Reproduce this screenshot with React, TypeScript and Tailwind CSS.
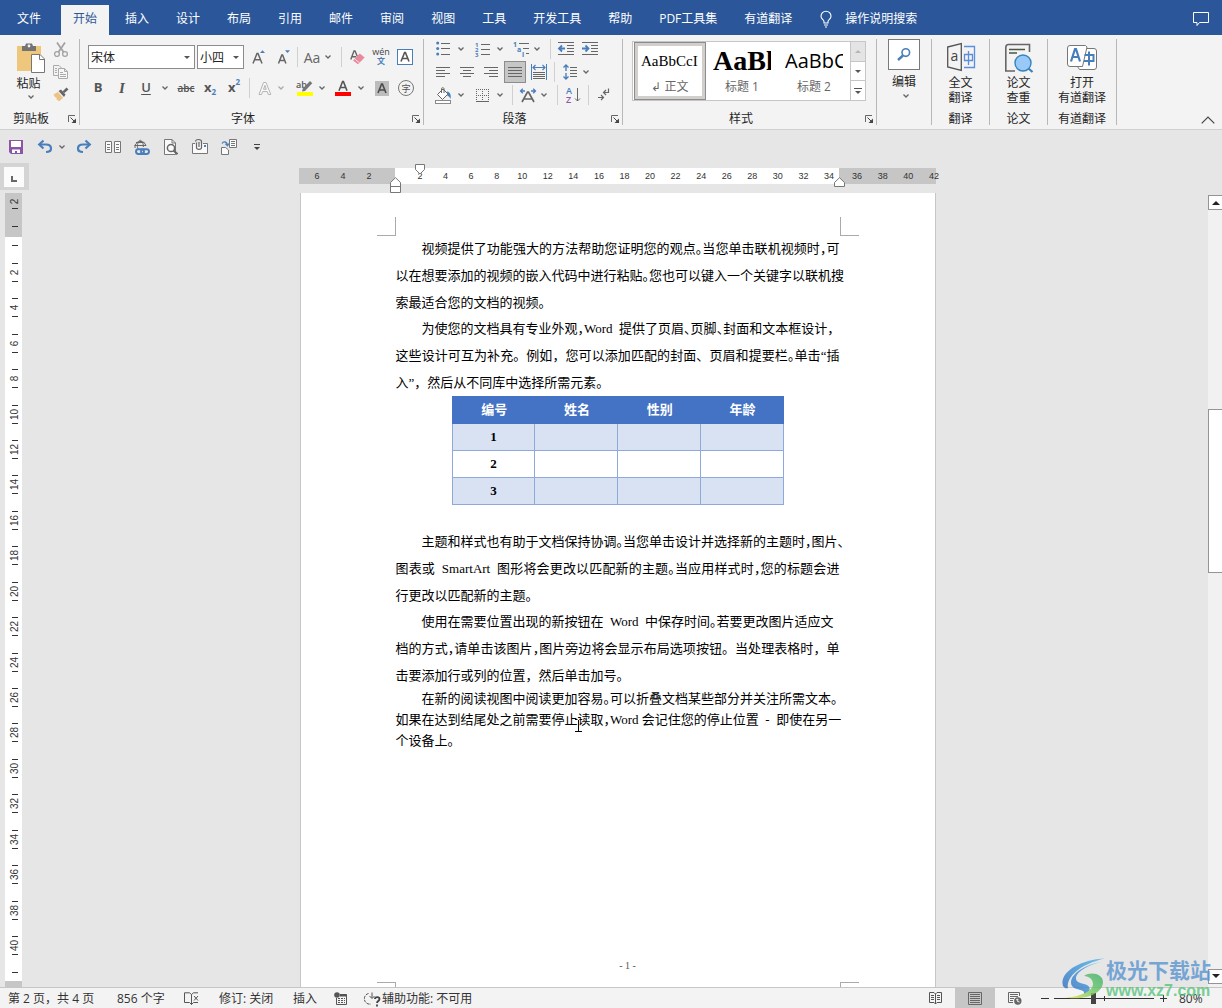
import React, { type ReactNode } from "react";

const GRAY = "#666666";
const BLUE = "#4a7ebb";

function Svg({ w, h, children, className = "" }: { w: number; h: number; children: ReactNode; className?: string }) {
  return (
    <svg width={w} height={h} viewBox={`0 0 ${w} ${h}`} fill="none" className={`shrink-0 overflow-visible ${className}`} aria-hidden="true">
      {children}
    </svg>
  );
}

function Tool({ label, className = "w-6", children }: { label: string; className?: string; children: ReactNode }) {
  return (
    <button type="button" aria-label={label} title={label} className={`flex h-[22px] shrink-0 items-center justify-center ${className}`}>
      {children}
    </button>
  );
}

function Chevron() {
  return (
    <Svg w={6} h={4}>
      <path d="M0.5 0.5 L3 3 L5.5 0.5" stroke={GRAY} strokeWidth="1.3" />
    </Svg>
  );
}

function More({ label, className = "w-3" }: { label: string; className?: string }) {
  return (
    <Tool label={label} className={className}>
      <Chevron />
    </Tool>
  );
}

function Sep({ className = "" }: { className?: string }) {
  return <div className={`h-5 w-px shrink-0 bg-[#d0d0d0] ${className}`} />;
}

function Launcher({ label }: { label: string }) {
  return (
    <button type="button" aria-label={label} className="mr-[3px] mt-[3px] flex h-2 w-2 shrink-0">
      <Svg w={8} h={8}>
        <path d="M0.5 7 V0.5 H7" stroke="#666" />
        <path d="M2.5 2.5 L6 6" stroke="#444" />
        <path d="M8 3.5 V8 H3.5 Z" fill="#444" />
      </Svg>
    </button>
  );
}

function Group({ label, width, launcher = false, children }: { label: string; width: string; launcher?: boolean; children: ReactNode }) {
  return (
    <section aria-label={label} className={`flex shrink-0 flex-col border-r border-[#b8b8b8] ${width}`}>
      <div className="min-h-0 flex-1">{children}</div>
      <div className="flex h-[15px] items-center">
        <span className={`flex-1 pt-[2px] text-center leading-[15px] ${launcher ? "pr-[6px]" : ""}`}>{label}</span>
        {launcher && <Launcher label={`${label}设置`} />}
      </div>
    </section>
  );
}

const tabsAfter = ["插入", "设计", "布局", "引用", "邮件", "审阅", "视图", "工具", "开发工具", "帮助", "PDF工具集", "有道翻译"];

function TabBar() {
  return (
    <nav className="flex h-[35px] shrink-0 items-stretch gap-[3px] bg-[#2b579a] pl-[5px] pr-3 pt-[5px] text-white">
      <button type="button" className="mb-[2px] mr-[5px] px-3">文件</button>
      <button type="button" className="mr-px bg-[#f3f3f3] px-3 pb-[2px] text-[#2b579a]">开始</button>
      {tabsAfter.map((t) => (
        <button type="button" key={t} className="mb-[2px] whitespace-nowrap px-3">
          {t}
        </button>
      ))}
      <button type="button" className="mb-[2px] flex items-center gap-[13px] whitespace-nowrap pl-[13px]">
        <Svg w={12} h={17} className="mt-px">
          <path d="M4 12 V10.5 C4 9 1 8 1 5.2 A4.6 4.6 0 0 1 11 5.2 C11 8 8 9 8 10.5 V12 Z M4 14 H8 M5 16 H7" stroke="#fff" strokeWidth="1.1" />
        </Svg>
        操作说明搜索
      </button>
      <button type="button" aria-label="批注" className="mb-[2px] ml-auto">
        <Svg w={18} h={16}>
          <path d="M1.5 1.5 H16.5 V11.5 H7.5 L5 14.5 V11.5 H1.5 Z" stroke="#fff" />
        </Svg>
      </button>
    </nav>
  );
}

function Combo({ label, value, options, className }: { label: string; value: string; options: string[]; className: string }) {
  return (
    <div className={`relative h-6 border border-[#8c8c8c] bg-white ${className}`}>
      <select aria-label={label} defaultValue={value} className="block h-full w-full appearance-none bg-transparent pl-[2px] pt-[2px] text-[#222] outline-none">
        {options.map((o) => (
          <option key={o}>{o}</option>
        ))}
      </select>
      <svg width="6" height="3" className="pointer-events-none absolute right-[4px] top-[10px]" aria-hidden="true">
        <path d="M0 0 H6 L3 3 Z" fill="#555" />
      </svg>
    </div>
  );
}

function ClipboardGroup() {
  return (
    <Group label="剪贴板" width="w-20" launcher>
      <div className="flex">
        <button type="button" className="flex w-[50px] flex-col items-center pl-[11px] pt-1">
          <Svg w={28} h={30}>
            <rect x="0" y="3" width="24" height="25" fill="#eec67c" />
            <path d="M5 3 H8 L9 0.5 H15 L16 3 H19 V8 H5 Z" fill="#737373" />
            <circle cx="12" cy="3" r="1.4" fill="#f3f3f3" />
            <path d="M14.5 11.5 H23 L27.5 16 V29.5 H14.5 Z" fill="#fff" stroke="#777" />
            <path d="M22.5 11.5 V16.5 H27.5" stroke="#777" />
          </Svg>
          <span className="-ml-1 mt-[3px] h-[15px] whitespace-nowrap leading-[15px]">粘贴</span>
          <span className="mt-1">
            <Chevron />
          </span>
        </button>
        <div className="flex flex-col">
          <Tool label="剪切" className="w-[22px]">
            <Svg w={14} h={16}>
              <path d="M3 0.5 L9.5 10 M11 0.5 L4.5 10" stroke="#a3a3a3" strokeWidth="1.8" />
              <circle cx="3" cy="12" r="2.4" stroke="#a3a3a3" strokeWidth="1.3" />
              <circle cx="11" cy="12" r="2.4" stroke="#a3a3a3" strokeWidth="1.3" />
            </Svg>
          </Tool>
          <Tool label="复制" className="w-[22px]">
            <Svg w={16} h={15}>
              <path d="M5 10.5 H0.5 V0.5 H6 L8.5 3" stroke="#aaa" />
              <path d="M5.5 3.5 H11.5 L14.5 6.5 V13.5 H5.5 Z" fill="#f7f7f7" stroke="#aaa" />
              <path d="M11.5 3.5 V6.5 H14.5 M7 7.5 H10 M7 9.5 H13 M7 11.5 H13 M2 3.5 H4 M2 5.5 H4 M2 7.5 H4" stroke="#aaa" />
            </Svg>
          </Tool>
          <Tool label="格式刷" className="w-[22px]">
            <Svg w={16} h={15}>
              <path d="M13.5 0.5 L15.5 2.5 L11.5 6 L9.5 4.5 Z" fill="#666" />
              <path d="M5.5 4 L8 2.5 L12.5 7.5 L11 10 Z" fill="#666" />
              <path d="M4.8 5 L10.2 10.8 L6 14.5 C5 13 4 12.5 3 12.5 L4 11 C2.5 11 1.5 9.5 0.5 7.5 Z" fill="#ecc384" />
            </Svg>
          </Tool>
        </div>
      </div>
    </Group>
  );
}

function FontGroup() {
  return (
    <Group label="字体" width="w-[344px]" launcher>
      <div className="flex h-[30px] items-center pl-2 pt-[6px]">
        <Combo label="字体" value="宋体" options={["宋体", "黑体", "楷体"]} className="w-[107px]" />
        <Combo label="字号" value="小四" options={["小四", "四号", "五号"]} className="ml-[2px] w-[47px]" />
        <Tool label="增大字号" className="ml-[3px] w-6">
          <Svg w={14} h={14}>
            <path d="M1 13.5 L5 3.5 H6 L10 13.5 M2.5 9.8 H8.5" stroke={GRAY} strokeWidth="1.5" />
            <path d="M8 3 L10.5 0.3 L13 3 Z" fill={BLUE} />
          </Svg>
        </Tool>
        <Tool label="减小字号" className="w-[26px]">
          <Svg w={14} h={14}>
            <path d="M1.5 13.5 L4.8 5 H5.6 L8.9 13.5 M2.8 10.4 H7.6" stroke={GRAY} strokeWidth="1.5" />
            <path d="M8 0.3 L10.5 3 L13 0.3 Z" fill={BLUE} />
          </Svg>
        </Tool>
        <Sep />
        <Tool label="更改大小写" className="ml-[2px] w-6 text-[14px] text-[#666]">Aa</Tool>
        <More label="大小写选项" className="ml-[-2px] w-3" />
        <Sep className="ml-[7px]" />
        <Tool label="清除所有格式" className="ml-[3px] w-6">
          <Svg w={15} h={15}>
            <path d="M0.8 9.5 L4 1 H5 L7.4 6.5 M2 6.8 H6" stroke={GRAY} strokeWidth="1.4" />
            <path d="M9.8 3.5 L14.6 7.4 L8 14.3 L3 10.5 Z" fill="#e8899d" />
            <path d="M4.6 8.9 L9.5 12.8" stroke="#fbe3e8" />
          </Svg>
        </Tool>
        <Tool label="拼音指南" className="w-6 flex-col">
          <span className="h-2 text-[9px] leading-[6px] text-[#444]">wén</span>
          <span className="h-2 text-[8px] font-bold leading-[8px] text-[#4a7ebb]">文</span>
        </Tool>
        <Tool label="字符边框" className="w-6">
          <Svg w={16} h={16}>
            <rect x="0.5" y="0.5" width="15" height="15" fill="#fff" stroke={BLUE} />
            <path d="M4 12.5 L7.6 3.5 H8.4 L12 12.5 M5.2 9.5 H10.8" stroke="#555" strokeWidth="1.6" />
          </Svg>
        </Tool>
      </div>
      <div className="flex h-[38px] items-center pl-[6px] text-[#555]">
        <Tool label="加粗"><b className="text-[13px]">B</b></Tool>
        <Tool label="倾斜"><i className="font-['Liberation_Serif'] text-[15px] font-bold">I</i></Tool>
        <Tool label="下划线"><span className="text-[13px] font-semibold underline underline-offset-2">U</span></Tool>
        <More label="下划线选项" className="ml-[1px] w-3" />
        <Tool label="删除线" className="ml-[3px] w-6"><span className="text-[10px] font-semibold line-through">abc</span></Tool>
        <Tool label="下标"><b className="text-[13px]">x</b><span className="mt-2 text-[8px] font-bold text-[#4a7ebb]">2</span></Tool>
        <Tool label="上标"><b className="text-[13px]">x</b><span className="mb-3 text-[8px] font-bold text-[#4a7ebb]">2</span></Tool>
        <Sep className="ml-[3px]" />
        <Tool label="文本效果" className="ml-[3px] w-6">
          <Svg w={14} h={15}>
            <path d="M1 13.5 L5.5 1.5 H8 L12.8 13.5 H10.3 L9.2 10.5 H4.6 L3.5 13.5 Z M5.5 8.3 H8.3 L6.9 4.3 Z" fill="#fafafa" stroke="#b5b5b5" />
          </Svg>
        </Tool>
        <More label="文本效果选项" className="ml-[-2px] w-3 opacity-50" />
        <Tool label="突出显示" className="ml-[5px] w-6">
          <Svg w={17} h={17}>
            <text x="0" y="8" fontSize="9" fill="#555" fontWeight="600">ab</text>
            <path d="M14 1 L16.3 3.3 L9 11 L6 11.5 L6.8 8.5 Z" fill="#777" />
            <rect x="1" y="12" width="16" height="4" fill="#ffff00" />
          </Svg>
        </Tool>
        <More label="突出显示选项" className="w-3" />
        <Tool label="字体颜色" className="ml-[3px] w-6">
          <Svg w={16} h={17}>
            <path d="M4 10.8 L7.6 1.5 H8.4 L12 10.8 M5.2 7.5 H10.8" stroke="#555" strokeWidth="1.6" />
            <rect x="0" y="12" width="16" height="4" fill="#ff0000" />
          </Svg>
        </Tool>
        <More label="字体颜色选项" />
        <Tool label="字符底纹" className="ml-[3px] w-6">
          <Svg w={14} h={15}>
            <rect width="14" height="15" fill="#bcbcbc" />
            <path d="M3 12 L6.6 3 H7.4 L11 12 M4.2 9 H9.8" stroke="#4a4a4a" strokeWidth="1.6" />
          </Svg>
        </Tool>
        <Tool label="带圈字符">
          <span className="flex h-4 w-4 items-center justify-center rounded-full border border-[#777] text-[9px] leading-none">字</span>
        </Tool>
      </div>
    </Group>
  );
}

function Lines({ rows }: { rows: [number, number][] }) {
  return (
    <Svg w={14} h={12}>
      {rows.map(([a, b], i) => (
        <path key={i} d={`M${a} ${i * 3 + 1.5} H${b}`} stroke={GRAY} />
      ))}
    </Svg>
  );
}

function ParagraphGroup() {
  return (
    <Group label="段落" width="w-[199px]" launcher>
      <div className="flex h-[19px] items-center pl-[7px]">
        <Tool label="项目符号">
          <Svg w={14} h={15}>
            {[2, 7.5, 13].map((y) => (
              <g key={y}>
                <circle cx="1.7" cy={y} r="1.5" fill={BLUE} />
                <path d={`M5 ${Math.floor(y)}.5 H14`} stroke={GRAY} />
              </g>
            ))}
          </Svg>
        </Tool>
        <More label="项目符号选项" />
        <Tool label="编号" className="ml-[3px] w-6">
          <Svg w={15} h={16}>
            {[1, 2, 3].map((n) => (
              <g key={n}>
                <text x="0" y={n * 5 + 0.5} fontSize="6" fontWeight="700" fill={BLUE}>{n}</text>
                <path d={`M6 ${n * 5 - 1.5} H15`} stroke={GRAY} />
              </g>
            ))}
          </Svg>
        </Tool>
        <More label="编号选项" />
        <Tool label="多级列表" className="ml-[3px] w-6">
          <Svg w={17} h={16}>
            <text x="0" y="5.5" fontSize="7" fontWeight="700" fill={BLUE}>1</text>
            <text x="4" y="10.5" fontSize="7" fontWeight="700" fill={BLUE}>a</text>
            <text x="9" y="15.5" fontSize="7" fontWeight="700" fill={BLUE}>i</text>
            <path d="M6 2.5 H16 M10 7.5 H16 M13 12.5 H16" stroke={GRAY} />
          </Svg>
        </Tool>
        <More label="多级列表选项" className="ml-[-2px] w-3" />
        <Sep className="ml-[7px]" />
        <Tool label="减少缩进" className="ml-[3px] w-6">
          <Svg w={16} h={13}>
            <path d="M0 0.5 H16 M9 3.5 H16 M9 6.5 H16 M9 9.5 H16 M0 12.5 H16" stroke={GRAY} />
            <path d="M1 6.5 H7 M4 3.5 L1 6.5 L4 9.5" stroke={BLUE} strokeWidth="1.8" />
          </Svg>
        </Tool>
        <Tool label="增加缩进">
          <Svg w={16} h={13}>
            <path d="M0 0.5 H16 M9 3.5 H16 M9 6.5 H16 M9 9.5 H16 M0 12.5 H16" stroke={GRAY} />
            <path d="M0 6.5 H6 M3.5 3.5 L6.5 6.5 L3.5 9.5" stroke={BLUE} strokeWidth="1.8" />
          </Svg>
        </Tool>
      </div>
      <div className="flex h-[27px] items-center pl-[7px]">
        <Tool label="左对齐"><Lines rows={[[0, 14], [0, 9], [0, 14], [0, 9]]} /></Tool>
        <Tool label="居中"><Lines rows={[[0, 14], [3, 11], [0, 14], [3, 11]]} /></Tool>
        <Tool label="右对齐"><Lines rows={[[0, 14], [5, 14], [0, 14], [5, 14]]} /></Tool>
        <Tool label="两端对齐" className="mx-px w-[22px] border border-[#8c8c8c] bg-[#c6c6c6]"><Lines rows={[[0, 14], [0, 14], [0, 14], [0, 14]]} /></Tool>
        <Tool label="分散对齐">
          <Svg w={16} h={16}>
            <path d="M0.5 0 V16 M15.5 0 V16" stroke={BLUE} />
            <path d="M2 3.5 H14 M4.5 1 L2 3.5 L4.5 6 M11.5 1 L14 3.5 L11.5 6" stroke={BLUE} strokeWidth="1.2" />
            <path d="M2 8.5 H14 M2 10.5 H14 M2 12.5 H14 M2 14.5 H14" stroke={GRAY} />
          </Svg>
        </Tool>
        <Sep className="ml-[3px]" />
        <Tool label="行距" className="ml-[3px] w-6">
          <Svg w={14} h={16}>
            <path d="M3 1 V7 M0.5 3.5 L3 1 L5.5 3.5 M3 9 V15 M0.5 12.5 L3 15 L5.5 12.5" stroke={BLUE} strokeWidth="1.4" />
            <path d="M7 3.5 H14 M7 6.5 H14 M7 9.5 H14 M7 12.5 H14" stroke={GRAY} />
          </Svg>
        </Tool>
        <More label="行距选项" className="ml-[-2px] w-3" />
      </div>
      <div className="flex h-5 items-center pl-[7px]">
        <Tool label="底纹">
          <Svg w={17} h={17}>
            <path d="M2.5 7.5 L8 2 L13 7 L7.5 12.5 Z" fill="#fff" stroke={GRAY} />
            <path d="M6.5 6 V1.5 C6.5 0.5 9 0.5 9 1.5 V6" stroke={GRAY} />
            <path d="M12 4.5 C15 5 16.5 8 15.5 12 C14.5 10 14 9 12.5 9 Z" fill={BLUE} />
            <rect x="0.5" y="13.5" width="15" height="3" fill="#fff" stroke="#8a8a8a" />
          </Svg>
        </Tool>
        <More label="底纹选项" />
        <Tool label="边框" className="ml-[3px] w-6">
          <Svg w={13} h={13}>
            <path d="M0.5 0 V12 M6.5 0 V12 M12.5 0 V12 M0 0.5 H13 M0 6.5 H13" stroke={GRAY} strokeDasharray="1 1" />
            <path d="M0 12.5 H13" stroke={GRAY} />
          </Svg>
        </Tool>
        <More label="边框选项" className="w-3" />
        <Sep className="ml-[6px]" />
        <Tool label="中文版式" className="ml-[3px] w-6">
          <Svg w={16} h={15}>
            <path d="M0.5 3 H5 M2.8 0.7 L0.5 3 L2.8 5.3 M15.5 3 H11 M13.2 0.7 L15.5 3 L13.2 5.3" stroke={BLUE} strokeWidth="1.3" />
            <path d="M2 14 L7.5 4 H8.5 L14 14 M4 11 H12" stroke={GRAY} strokeWidth="1.7" />
          </Svg>
        </Tool>
        <More label="中文版式选项" className="ml-[-2px] w-3" />
        <Sep className="ml-[7px]" />
        <Tool label="排序" className="ml-[3px] w-6">
          <Svg w={14} h={17}>
            <text x="0" y="7" fontSize="9" fontWeight="600" fill={BLUE}>A</text>
            <text x="0" y="16" fontSize="9" fontWeight="600" fill="#8c5aa8">Z</text>
            <path d="M11.5 1 V14 M9 11.5 L11.5 14 L14 11.5" stroke={GRAY} />
          </Svg>
        </Tool>
        <Sep className="ml-[3px]" />
        <Tool label="显示编辑标记" className="ml-[3px] w-6">
          <Svg w={12} h={14}>
            <path d="M10.5 0.5 V4.5 H6 M8 2 L5.5 4.5 L8 7" stroke={GRAY} strokeWidth="1.2" />
            <path d="M0 9.5 H5.5 M3 7 L5.5 9.5 L3 12" stroke={GRAY} strokeWidth="1.2" />
          </Svg>
        </Tool>
      </div>
    </Group>
  );
}

function StyleItem({ selected = false, preview, name, font }: { selected?: boolean; preview: string; name: string; font: string }) {
  return (
    <button
      type="button"
      className={`flex w-[72px] flex-col items-center ${selected ? "border border-[#8c8c8c] bg-white ring-[3px] ring-inset ring-[#d0cfcb]" : "border border-transparent"}`}
    >
      <span className={`block h-9 w-[58px] overflow-hidden whitespace-nowrap text-left leading-[36px] text-black ${font}`}>{preview}</span>
      <span className="whitespace-nowrap leading-[15px] text-[#666]">{name}</span>
    </button>
  );
}

function StylesGroup() {
  return (
    <Group label="样式" width="w-[254px]" launcher>
      <div className="ml-[9px] mt-[2px] flex h-[60px] w-[234px] border border-[#c6c6c6] bg-white">
        <div className="flex flex-1 pl-px">
          <StyleItem selected preview="AaBbCcI" name="↲ 正文" font="font-['Liberation_Serif'] text-[15px]" />
          <StyleItem preview="AaBl" name="标题 1" font="font-['Liberation_Serif'] text-[28px] font-bold" />
          <StyleItem preview="AaBbC" name="标题 2" font="font-['Open_Sans'] text-[20px]" />
        </div>
        <div className="flex w-[15px] flex-col divide-y divide-[#c6c6c6] border-l border-[#c6c6c6]">
          <button type="button" aria-label="上一行样式" className="flex flex-1 items-center justify-center bg-[#e4e4e4]">
            <Svg w={6} h={3}><path d="M0 3 H6 L3 0 Z" fill="#b5b5b5" /></Svg>
          </button>
          <button type="button" aria-label="下一行样式" className="flex flex-1 items-center justify-center">
            <Svg w={6} h={3}><path d="M0 0 H6 L3 3 Z" fill="#555" /></Svg>
          </button>
          <button type="button" aria-label="更多样式" className="flex flex-1 items-center justify-center">
            <Svg w={8} h={6}><path d="M0 0.5 H8" stroke="#555" /><path d="M1 3 H7 L4 6 Z" fill="#555" /></Svg>
          </button>
        </div>
      </div>
    </Group>
  );
}

function BigButton({ icon, top, bottom }: { icon: ReactNode; top: string; bottom: string }) {
  return (
    <button type="button" className="flex w-full flex-col items-center whitespace-nowrap pt-1 leading-[15px]">
      <span className="flex h-[32px] items-start">{icon}</span>
      <span>{top}</span>
      <span>{bottom}</span>
    </button>
  );
}

function Ribbon() {
  return (
    <div className="flex h-[95px] shrink-0 border-b border-[#d0d0d0] bg-[#f3f3f3] py-1 text-[#262626]">
      <ClipboardGroup />
      <FontGroup />
      <ParagraphGroup />
      <StylesGroup />
      <section aria-label="编辑" className="flex w-[55px] shrink-0 flex-col border-r border-[#b8b8b8]">
        <button type="button" className="flex flex-col items-center">
          <span className="flex h-[31px] w-8 items-center justify-center border border-[#7a7a7a] bg-white">
            <Svg w={14} h={13}>
              <circle cx="8.8" cy="4.6" r="3.8" stroke={BLUE} strokeWidth="1.6" />
              <path d="M6 7.5 L1 12" stroke={BLUE} strokeWidth="2.4" />
            </Svg>
          </span>
          <span className="mt-1 leading-[15px]">编辑</span>
          <span className="ml-1 mt-[5px]"><Chevron /></span>
        </button>
      </section>
      <Group label="翻译" width="w-[58px]">
        <BigButton
          top="全文"
          bottom="翻译"
          icon={
            <Svg w={28} h={28}>
              <path d="M0.7 4 L14.3 0.7 V27.3 L0.7 24 Z" stroke="#555" strokeWidth="1.3" />
              <path d="M17 3.5 H27.5 V24.5 H17" stroke="#5b8fdc" strokeWidth="1.3" />
              <text x="3.5" y="18" fontSize="14" fill="#444">a</text>
              <path d="M17.5 11.5 H25.5 V17.5 H17.5 Z M21.5 8 V22" stroke="#5b8fdc" strokeWidth="1.3" />
            </Svg>
          }
        />
      </Group>
      <Group label="论文" width="w-[58px]">
        <BigButton
          top="论文"
          bottom="查重"
          icon={
            <Svg w={28} h={30}>
              <path d="M24.5 9 V1.5 H3.5 C1.5 1.5 0.8 2.5 0.8 4.5 V28 H10" stroke="#666" strokeWidth="1.6" />
              <path d="M4 6.5 H20 M4 10 H12" stroke="#4d5545" strokeWidth="1.6" />
              <circle cx="18" cy="20" r="8" fill="#99c9f8" stroke="#3584bd" strokeWidth="1.4" />
              <path d="M23.5 25.5 L27.5 29" stroke="#3584bd" strokeWidth="2.2" />
            </Svg>
          }
        />
      </Group>
      <Group label="有道翻译" width="w-[69px]">
        <BigButton
          top="打开"
          bottom="有道翻译"
          icon={
            <Svg w={30} h={28}>
              <path d="M20 5.5 H27 Q29.5 5.5 29.5 8 V24 Q29.5 26.5 27 26.5 H12.5 L10.5 23.5" fill="#fff" stroke="#777" />
              <path d="M3 2.5 H18.5 L20 4 L15.5 23.5 H3 Q0.5 23.5 0.5 21 V5 Q0.5 2.5 3 2.5 Z" fill="#fff" stroke="#777" />
              <path d="M4 18.5 L8 6 H9 L13 18.5 M5.5 14 H11.5" stroke={BLUE} strokeWidth="2.2" />
              <path d="M17.5 12 H26.5 V18 H17 M22 8.5 V22.5" stroke={BLUE} strokeWidth="2" />
            </Svg>
          }
        />
      </Group>
      <button type="button" aria-label="折叠功能区" className="ml-auto mr-[7px] self-end pb-px">
        <Svg w={14} h={8}><path d="M0.7 7.3 L7 1 L13.3 7.3" stroke="#444" strokeWidth="1.2" /></Svg>
      </button>
    </div>
  );
}

function QuickAccess() {
  return (
    <div className="flex h-[33px] shrink-0 items-center pl-1">
      <Tool label="保存">
        <Svg w={14} h={14}>
          <path d="M0 0 H14 V14 H2 L0 12 Z" fill="#8a55a8" />
          <rect x="2" y="1" width="10" height="6" fill="#fff" />
          <path d="M3 9.5 H11 V13 H8 V11 H6 V13 H3 Z" fill="#fff" />
        </Svg>
      </Tool>
      <Tool label="撤消" className="ml-[5px] w-6">
        <Svg w={15} h={13}>
          <path d="M2 4.5 H8 C12 4.5 13 7 13 8.5 C13 10.5 11.5 12 8 12" stroke={BLUE} strokeWidth="2.2" />
          <path d="M5.5 0.5 L1.2 4.5 L5.5 8.5" stroke={BLUE} strokeWidth="2.2" />
        </Svg>
      </Tool>
      <More label="撤消选项" className="ml-[-1px] w-3" />
      <Tool label="恢复" className="ml-[3px] w-6">
        <Svg w={15} h={13}>
          <path d="M13 4.5 H7 C3 4.5 2 7 2 8.5 C2 10.5 3.5 12 7 12" stroke={BLUE} strokeWidth="2.2" />
          <path d="M9.5 0.5 L13.8 4.5 L9.5 8.5" stroke={BLUE} strokeWidth="2.2" />
        </Svg>
      </Tool>
      <Tool label="并排查看" className="ml-[6px] w-6">
        <Svg w={16} h={12}>
          <path d="M0.5 0.5 H6.5 V11.5 H0.5 Z M9.5 0.5 H15.5 V11.5 H9.5 Z" fill="#fafafa" stroke="#777" />
          <path d="M2 3.5 H5 M2 6.5 H5 M2 8.5 H5 M11 3.5 H14 M11 6.5 H14 M11 8.5 H14" stroke="#777" />
        </Svg>
      </Tool>
      <Tool label="超链接" className="ml-[5px] w-6">
        <Svg w={16} h={16}>
          <path d="M1 9 A5.5 5.5 0 1 1 12 7 M0.5 6.5 H12 M6.3 1 C3 4 3 7 4 10 M6.3 1 C9 3 9.5 5 9.3 8 M2 3.5 H10.5" stroke={GRAY} />
          <rect x="2" y="10.2" width="8" height="4.8" rx="2.4" stroke={BLUE} strokeWidth="1.9" />
          <rect x="7" y="10.2" width="8" height="4.8" rx="2.4" stroke={BLUE} strokeWidth="1.9" />
        </Svg>
      </Tool>
      <Tool label="打印预览" className="ml-[5px] w-6">
        <Svg w={15} h={16}>
          <path d="M0.5 0.5 H8 L11.5 4 V15.5 H0.5 Z" fill="#fafafa" stroke="#777" />
          <path d="M8 0.5 V4 H11.5" stroke="#777" />
          <circle cx="7" cy="9" r="3.6" fill="#fafafa" stroke={GRAY} strokeWidth="1.5" />
          <path d="M9.5 11.5 L13.5 15.3" stroke={GRAY} strokeWidth="2.2" />
        </Svg>
      </Tool>
      <Tool label="以附件发送" className="ml-[5px] w-6">
        <Svg w={16} h={15}>
          <path d="M3 4.5 H0.5 V14.5 H15.5 V4.5 H11" fill="#fafafa" stroke="#777" />
          <path d="M4.5 3.5 V8.5 C4.5 11 9.5 11 9.5 8.5 V2.5 C9.5 -0.2 3.5 -0.2 3.5 2.5 M7 3 V8" stroke={GRAY} strokeWidth="1.2" />
          <rect x="12" y="6" width="2" height="2" fill={BLUE} />
        </Svg>
      </Tool>
      <Tool label="邮件合并" className="ml-[5px] w-6">
        <Svg w={16} h={16}>
          <path d="M8.5 0.5 H15.5 V8.5 H8.5 Z" fill="#fafafa" stroke="#777" />
          <path d="M10 2.5 H14 M10 4.5 H14 M10 6.5 H14" stroke="#777" />
          <path d="M0.5 8.5 H4.5 L7.5 11 V15.5 H0.5 Z" fill="#fafafa" stroke="#777" />
          <path d="M1 4.5 C2.5 2 6 2.5 6.5 6 M4.5 4.8 L6.5 6.8 L8 4.5" stroke={BLUE} strokeWidth="1.3" />
        </Svg>
      </Tool>
      <Tool label="自定义快速访问工具栏" className="ml-1 w-6">
        <Svg w={6} h={6}><path d="M0 0.5 H6" stroke="#444" /><path d="M0 3 H6 L3 6 Z" fill="#444" /></Svg>
      </Tool>
    </div>
  );
}

const evens = (from: number, to: number) => Array.from({ length: (to - from) / 2 + 1 }, (_, i) => from + i * 2);

function HorizontalRuler() {
  return (
    <div className="relative flex h-4 w-[637px] shrink-0 font-['Liberation_Sans'] text-[9px] leading-4 text-[#333]">
      <div className="flex w-24 justify-end bg-[#c6c6c6] pr-[13px]">
        {[6, 4, 2].map((n) => (
          <span key={n} className="w-[26px] text-center">{n}</span>
        ))}
      </div>
      <div className="flex flex-1 justify-between bg-white pl-[17px] pr-[2px]">
        {evens(2, 34).map((n) => (
          <span key={n} className="w-4 text-center">{n}</span>
        ))}
      </div>
      <div className="flex w-[97px] bg-[#c6c6c6] pl-[10px]">
        <div className="-mr-[6px] flex flex-1 justify-between">
          {evens(36, 42).map((n) => (
            <span key={n} className="w-4 text-center">{n}</span>
          ))}
        </div>
      </div>
      <svg width="12" height="11" className="absolute -top-[4px] left-[115px]" aria-hidden="true">
        <path d="M1.5 0.5 H10.5 V5.5 L6 10 L1.5 5.5 Z" fill="#fff" stroke="#777" />
      </svg>
      <svg width="12" height="17" className="absolute left-[91px] top-[9px]" aria-hidden="true">
        <path d="M0.5 15.5 V5.5 L5.5 0.7 L10.5 5.5 V15.5 Z M0.5 9.5 H10.5" fill="#fff" stroke="#777" />
      </svg>
      <svg width="12" height="11" className="absolute left-[535px] top-[9px]" aria-hidden="true">
        <path d="M0.5 9.5 V5.5 L5.5 0.7 L10.5 5.5 V9.5 Z" fill="#fff" stroke="#777" />
      </svg>
    </div>
  );
}

const Tick = () => <span className="h-px w-[6px] shrink-0 bg-[#333]" />;

function VerticalRuler() {
  return (
    <div className="ml-[5px] mt-[3px] flex min-h-0 w-[17px] flex-1 flex-col items-stretch font-['Liberation_Sans'] text-[10px] leading-none text-[#333]">
      <div className="flex h-11 shrink-0 flex-col items-center bg-[#c6c6c6] pl-[3px] pt-[2px]">
        <span className="flex h-[13px] items-center -rotate-90">2</span>
        <Tick />
        <span className="h-[17px]" />
        <Tick />
      </div>
      <div className="flex min-h-0 flex-1 flex-col bg-white pl-[3px]">
        <div className="flex flex-[1] items-center justify-center"><Tick /></div>
        {evens(2, 40).map((n) => (
          <div key={n} className="flex min-h-0 flex-[2] flex-col items-center justify-center gap-px">
            <Tick />
            <span className="flex h-[15px] items-center justify-center -rotate-90">{n}</span>
            <Tick />
          </div>
        ))}
        <div className="flex flex-[1] items-center justify-center"><Tick /></div>
      </div>
      <div className="h-[6px] shrink-0 bg-[#c6c6c6]" />
    </div>
  );
}

/** Half-width punctuation, as set in compressed lines. */
function H({ children }: { children: ReactNode }) {
  return <span className="[font-feature-settings:'halt']">{children}</span>;
}

function Para({ lines, full = [], lead = "h-20 leading-[27px]" }: { lines: ReactNode[]; full?: number[]; lead?: string }) {
  return (
    <p className={lead}>
      {lines.map((l, i) => (
        <span key={i} className={`block whitespace-nowrap ${i === 0 ? "pl-[26px]" : ""} ${full.includes(i) ? "[text-align-last:justify]" : ""}`}>
          {l}
        </span>
      ))}
    </p>
  );
}

function DocTable() {
  return (
    <table className="mx-auto mt-px w-[332px] table-fixed border-collapse text-center font-bold">
      <thead>
        <tr className="h-[27px] bg-[#4472c4] text-white">
          {["编号", "姓名", "性别", "年龄"].map((h) => (
            <th key={h} scope="col" className="border border-[#4472c4] p-0 pl-[2px] leading-[26px]">{h}</th>
          ))}
        </tr>
      </thead>
      <tbody>
        {[1, 2, 3].map((n) => (
          <tr key={n} className="h-[27px] odd:bg-[#d9e2f3]">
            <th scope="row" className="border border-[#8eaadb] p-0 leading-[26px]">{n}</th>
            <td className="border border-[#8eaadb]" />
            <td className="border border-[#8eaadb]" />
            <td className="border border-[#8eaadb]" />
          </tr>
        ))}
      </tbody>
    </table>
  );
}

function Page() {
  return (
    <main className="relative mt-[9px] flex min-h-0 w-[636px] flex-1 flex-col border-x border-[#c6c6c6] bg-white font-['Liberation_Serif','Noto_Sans_CJK_SC',serif] text-[13px] text-black">
      <div className="flex h-[43px] shrink-0 items-end justify-between px-[76px]">
        <span className="h-[19px] w-[19px] border-b border-r border-[#aaa]" />
        <span className="h-[19px] w-[19px] border-b border-l border-[#aaa]" />
      </div>
      <article className="-mt-px px-[95px]">
        <Para
          full={[0]}
          lines={[
            <>视频提供了功能强大的方法帮助您证明您的观点<H>。</H>当您单击联机视频时<H>，</H>可</>,
            <>以在想要添加的视频的嵌入代码中进行粘贴<H>。</H>您也可以键入一个关键字以联机搜</>,
            "索最适合您的文档的视频。",
          ]}
        />
        <Para
          full={[1]}
          lines={[
            <>为使您的文档具有专业外观<H>，</H>Word&nbsp; 提供了页眉<H>、</H>页脚<H>、</H>封面和文本框设计<H>，</H></>,
            <>这些设计可互为补充。例如，您可以添加匹配的封面、页眉和提要栏<H>。</H>单击“插</>,
            "入”，然后从不同库中选择所需元素。",
          ]}
        />
        <DocTable />
        <div className="h-[23px]" />
        <Para
          full={[1]}
          lines={[
            <>主题和样式也有助于文档保持协调<H>。</H>当您单击设计并选择新的主题时<H>，</H>图片<H>、</H></>,
            <>图表或&nbsp; SmartArt&nbsp; 图形将会更改以匹配新的主题<H>。</H>当应用样式时<H>，</H>您的标题会进</>,
            "行更改以匹配新的主题。",
          ]}
        />
        <Para
          full={[1]}
          lines={[
            <>使用在需要位置出现的新按钮在&nbsp; Word&nbsp; 中保存时间<H>。</H>若要更改图片适应文</>,
            <>档的方式<H>，</H>请单击该图片<H>，</H>图片旁边将会显示布局选项按钮。当处理表格时，单</>,
            "击要添加行或列的位置，然后单击加号。",
          ]}
        />
        <Para
          lead="leading-[21px]"
          lines={[
            <>在新的阅读视图中阅读更加容易<H>。</H>可以折叠文档某些部分并关注所需文本<H>。</H></>,
            <>如果在达到结尾处之前需要停止读取<H>，</H>Word 会记住您的停止位置&nbsp; -&nbsp; 即使在另一</>,
            "个设备上。",
          ]}
        />
      </article>
      <svg width="9" height="13" className="absolute left-[273px] top-[526px]" aria-hidden="true">
        <path d="M1 0.5 H3.5 M5.5 0.5 H8 M4.5 1 V12 M1 12.5 H8" stroke="#000" />
      </svg>
      <footer className="mt-auto text-[10px] text-[#555]">
        <div className="pl-5 text-center leading-3">-&nbsp;1&nbsp;-</div>
        <div className="mt-[10px] flex h-[5px] justify-between px-[76px]">
          <span className="w-[19px] border-r border-t border-[#aaa]" />
          <span className="w-[19px] border-l border-t border-[#aaa]" />
        </div>
      </footer>
    </main>
  );
}

function ScrollBar() {
  return (
    <div className="mt-8 flex w-[14px] shrink-0 flex-col bg-[#f1f1f1]">
      <button type="button" aria-label="向上滚动" className="flex h-[15px] items-center justify-center border border-r-0 border-[#949494] bg-white">
        <Svg w={8} h={4}><path d="M0 4 H8 L4 0 Z" fill="#222" /></Svg>
      </button>
      <div className="flex-[200]" />
      <div className="flex-[162] border border-r-0 border-[#949494] bg-white" />
      <div className="flex-[398]" />
      <button type="button" aria-label="向下滚动" className="mb-[3px] flex h-[15px] items-center justify-center border border-r-0 border-[#949494] bg-white">
        <Svg w={8} h={4}><path d="M0 0 H8 L4 4 Z" fill="#222" /></Svg>
      </button>
    </div>
  );
}

function StatusBar() {
  return (
    <footer className="flex h-[21px] shrink-0 items-center border-t border-[#c6c6c6] bg-[#f3f3f3] pl-2 pr-[18px] text-[#333]">
      <span className="w-[109px] whitespace-nowrap pt-px">第 2 页，共 4 页</span>
      <span className="w-[67px] whitespace-nowrap pt-px">856 个字</span>
      <button type="button" aria-label="拼写检查" className="w-[35px]">
        <Svg w={15} h={13}>
          <path d="M7.5 2.5 L5.5 0.8 H0.5 V10.5 H5.5 L7.5 12.5 V2.5 L9.5 0.8 H14 M7.5 12.5 L9.5 10.5 H14 M10 4 L14 8.5 M14 4 L10 8.5" stroke="#555" />
        </Svg>
      </button>
      <button type="button" className="w-[74px] whitespace-nowrap pt-px text-left">修订: 关闭</button>
      <button type="button" className="w-[41px] pt-px text-left">插入</button>
      <button type="button" aria-label="宏" className="w-[30px]">
        <Svg w={14} h={13}>
          <path d="M6 2.5 H12.5 V12.5 H2.5 V6" stroke="#555" />
          <path d="M6 3.5 H13" stroke="#555" strokeWidth="2" />
          <circle cx="3" cy="3" r="2.8" fill="#555" />
          <path d="M4 6.5 H11 M4 8.5 H11 M4 10.5 H11" stroke="#555" strokeDasharray="2 1" />
        </Svg>
      </button>
      <button type="button" className="flex items-center whitespace-nowrap pt-px">
        <Svg w={18} h={15} className="mt-px">
          <path d="M4.5 1.5 A5.3 5.3 0 0 0 7 12" stroke="#555" strokeDasharray="3 1" />
          <path d="M8 0.5 V6 M5.5 4 L8 6.5 L10.5 4" stroke="#555" />
          <path d="M11 7 C11 4.5 15.5 4.5 15.5 7 C15.5 9 13 9 13 11 M13 12.5 V14.5" stroke="#444" strokeWidth="1.8" />
        </Svg>
        辅助功能: 不可用
      </button>
      <div className="ml-auto flex h-full items-center">
        <button type="button" aria-label="阅读视图" className="flex h-full w-10 items-center justify-center">
          <Svg w={13} h={13}>
            <path d="M6.5 2 L5 0.5 H0.5 V10.5 H5 L6.5 12 L8 10.5 H12.5 V0.5 H8 Z M6.5 2 V12 M2 3.5 H5 M2 5.5 H5 M2 7.5 H5 M8 3.5 H11 M8 5.5 H11 M8 7.5 H11" stroke="#555" />
          </Svg>
        </button>
        <button type="button" aria-label="页面视图" aria-pressed="true" className="flex h-full w-10 items-center justify-center bg-[#c6c6c6]">
          <Svg w={14} h={13}>
            <path d="M0.5 0.5 H13.5 V12.5 H0.5 Z M2 2.5 H12 M2 4.5 H12 M2 6.5 H12 M2 8.5 H12 M2 10.5 H12" stroke="#666" />
          </Svg>
        </button>
        <button type="button" aria-label="Web 版式视图" className="flex h-full w-10 items-center justify-center">
          <Svg w={14} h={13}>
            <path d="M11.5 4 V0.5 H0.5 V10.5 H5 M2 2.5 H10 M2 4.5 H10 M2 6.5 H6 M2 8.5 H5" stroke="#666" />
            <circle cx="9.8" cy="9" r="3.7" fill="#666" />
            <path d="M8 8 L10 7 L9.5 9.5 L11.5 10" stroke="#eee" />
          </Svg>
        </button>
        <button type="button" aria-label="缩小" className="flex w-[19px] items-center justify-center"><span className="h-px w-2 bg-[#333]" /></button>
        <div className="relative flex h-full w-[100px] items-center">
          <span className="absolute left-[50px] top-[8px] h-[5px] w-px bg-[#333]" />
          <input
            type="range"
            aria-label="显示比例"
            min={0}
            max={100}
            defaultValue={39}
            className="relative h-3 w-full appearance-none bg-transparent [&::-webkit-slider-runnable-track]:h-px [&::-webkit-slider-runnable-track]:bg-[#333] [&::-webkit-slider-thumb]:-mt-[5px] [&::-webkit-slider-thumb]:h-[11px] [&::-webkit-slider-thumb]:w-[5px] [&::-webkit-slider-thumb]:appearance-none [&::-webkit-slider-thumb]:bg-[#444]"
          />
        </div>
        <button type="button" aria-label="放大" className="flex w-[18px] items-center justify-center">
          <Svg w={7} h={7}><path d="M0 3.5 H7 M3.5 0 V7" stroke="#333" /></Svg>
        </button>
        <span className="ml-[7px] w-[25px] pt-px">80%</span>
      </div>
    </footer>
  );
}

function Watermark() {
  return (
    <div className="pointer-events-none absolute bottom-[8px] right-[11px] flex items-center opacity-80">
      <Svg w={44} h={42}>
        <defs>
          <linearGradient id="sky" x1="0" y1="1" x2="1" y2="0">
            <stop offset="0" stopColor="#2f6fc0" />
            <stop offset="1" stopColor="#4cb8ee" />
          </linearGradient>
          <linearGradient id="leaf" x1="0" y1="1" x2="1" y2="0">
            <stop offset="0" stopColor="#e3e04f" />
            <stop offset="0.6" stopColor="#5fc463" />
            <stop offset="1" stopColor="#3fae6b" />
          </linearGradient>
        </defs>
        <path d="M43 0.5 C26 1 3 9 0.5 23 C0 29 3 31 6 30 C4 19 18 6 43 0.5 Z" fill="url(#sky)" />
        <path d="M39 4 C26 6 10 14 9 24 C8.5 31 17 31 21 33 C23 34.5 22 36 20 38.5 C28 35 30 30 25 27 C20 25 13 25 14 19 C16 13 26 7 39 4 Z" fill="url(#sky)" />
        <path d="M22 18 C29 13 41 16 41 24 C41 35 24 43 4 39.5 C18 39 31 33 31 26 C31 21 27 18.5 22 18 Z" fill="url(#leaf)" />
      </Svg>
      <div className="leading-none">
        <div className="text-[21px] font-bold leading-[23px] text-[#5b95d0]">极光下载站</div>
        <div className="font-['Liberation_Sans'] text-[16px] font-bold leading-[17px] text-[#5ac37d]">www.xz7.com</div>
      </div>
    </div>
  );
}

export default function App() {
  return (
    <div className="relative flex h-screen flex-col overflow-hidden bg-[#e6e6e6] font-['Open_Sans','Noto_Sans_CJK_SC',sans-serif] text-[12px]">
      <TabBar />
      <Ribbon />
      <QuickAccess />
      <div className="flex min-h-0 flex-1">
        <aside className="flex w-[29px] shrink-0 flex-col">
          <button type="button" aria-label="制表符类型" className="flex h-[27px] shrink-0 items-center border border-[#d4d4d4] bg-[#d4d4d4] pl-[3px]">
            <span className="flex h-5 w-5 items-center justify-center bg-[#fbfbfb] pt-1">
              <Svg w={6} h={6}><path d="M1 0 V5 H6" stroke="#666" strokeWidth="2" /></Svg>
            </span>
          </button>
          <VerticalRuler />
        </aside>
        <div className="flex min-w-0 flex-1 flex-col items-center pr-[2px] pt-[5px]">
          <HorizontalRuler />
          <Page />
        </div>
        <ScrollBar />
      </div>
      <StatusBar />
      <Watermark />
    </div>
  );
}
